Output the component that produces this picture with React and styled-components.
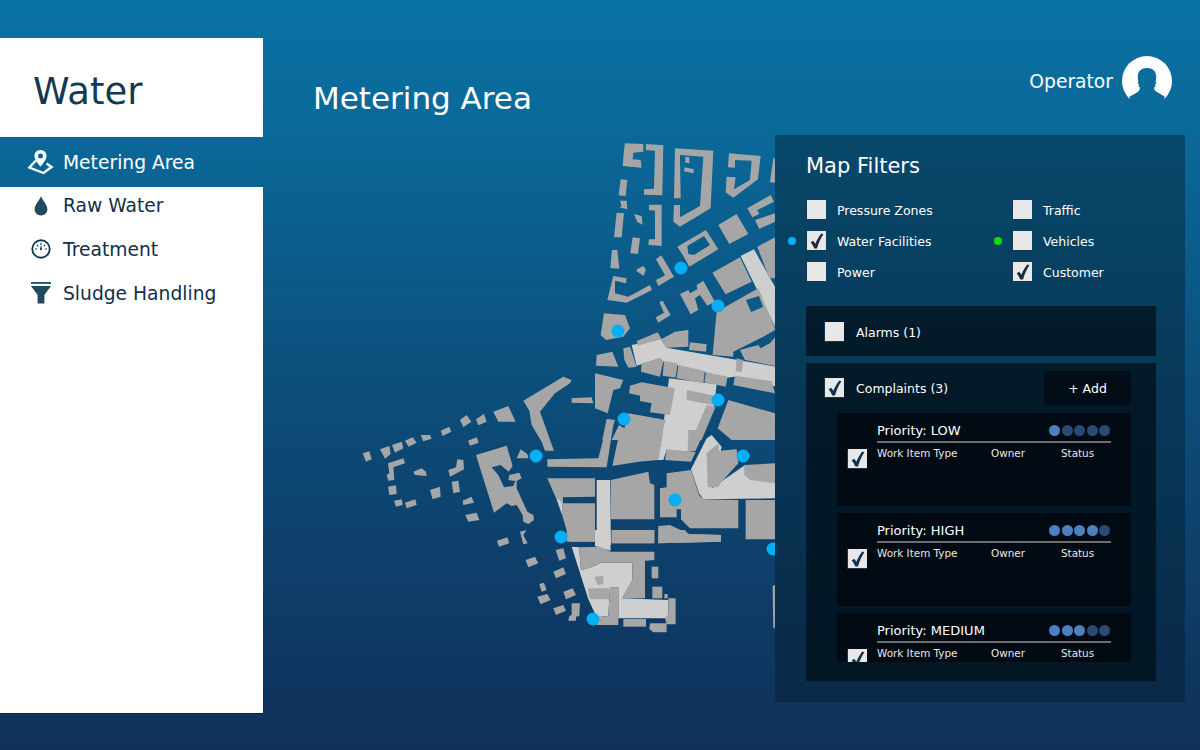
import styled, { createGlobalStyle } from "styled-components";

const GlobalStyle = createGlobalStyle`
  html, body {
    margin: 0;
    padding: 0;
  }
  body {
    font-family: "DejaVu Sans", Verdana, sans-serif;
  }
`;

const Page = styled.div`
  width: 1200px;
  height: 750px;
  display: flex;
  overflow: hidden;
  background: linear-gradient(to bottom, #0a72a4 0%, #0a6797 20%, #0c4f7c 50%, #0f3059 100%);
`;

const Sidebar = styled.aside`
  width: 263px;
  height: 676px;
  margin-top: 38px;
  display: flex;
  flex-direction: column;
  gap: 1px;
  flex-shrink: 0;
`;

const Brand = styled.div`
  height: 92px;
  padding: 7px 0 0 33px;
  display: flex;
  align-items: center;
  background: #fff;
  color: #143a50;
  font-size: 37px;
`;

const ActiveItem = styled.div`
  height: 48px;
  display: flex;
  align-items: center;
  padding-left: 27px;
  gap: 9px;
  color: #fff;
  font-size: 18.7px;
`;

const NavList = styled.nav`
  flex: 1;
  display: flex;
  flex-direction: column;
  gap: 10px;
  padding-top: 1px;
  background: #fff;
  border-bottom: 1px solid #0c2440;
`;

const NavItem = styled.div`
  height: 34px;
  display: flex;
  align-items: center;
  padding-left: 30px;
  gap: 11px;
  color: #12304a;
  font-size: 18.7px;
`;

const IconSlot = styled.span`
  width: 22px;
  display: flex;
  justify-content: center;
`;

const Main = styled.main`
  flex: 1;
  display: flex;
  flex-direction: column;
`;

const TopBar = styled.header`
  height: 135px;
  display: flex;
  justify-content: space-between;
  align-items: flex-start;
  padding: 56px 28px 0 50px;
  box-sizing: border-box;
`;

const Title = styled.h1`
  margin: 22px 0 0;
  font-size: 31px;
  line-height: 40px;
  font-weight: 400;
  color: #fff;
`;

const User = styled.div`
  display: flex;
  align-items: center;
  gap: 9px;
  color: #fff;
  font-size: 18.7px;
`;

const Content = styled.div`
  display: flex;
  padding-left: 97px;
`;

const MapCanvas = styled.svg`
  width: 415px;
  height: 530px;
  flex-shrink: 0;
  display: block;
`;

const Panel = styled.section`
  width: 410px;
  height: 567px;
  box-sizing: border-box;
  padding: 19px 29px 0 31px;
  background: rgba(3, 26, 38, 0.4);
`;

const PanelTitle = styled.h2`
  margin: 0 0 22px;
  font-size: 21px;
  line-height: 24px;
  font-weight: 400;
  color: #fff;
`;

const FilterGrid = styled.div`
  display: grid;
  grid-template-columns: 206px 1fr;
  grid-auto-rows: 31px;
  margin-bottom: 13px;
`;

const Filter = styled.label`
  position: relative;
  display: flex;
  align-items: flex-start;
  gap: 11px;
  color: #fff;
  font-size: 12.5px;
  line-height: 21px;
`;

const LegendDot = styled.span`
  position: absolute;
  left: -18px;
  top: 6px;
  width: 8px;
  height: 8px;
  border-radius: 50%;
  background: ${(p) => p.$color};
`;

const Box = styled.span`
  width: 20px;
  height: 20px;
  flex-shrink: 0;
  display: flex;
  align-items: center;
  justify-content: center;
  box-sizing: border-box;
  background: #e8e8e8;
  border: 1px solid #1c3350;
  border-width: 0 0 1px 1px;
`;

const Section = styled.div`
  background: rgba(2, 14, 22, 0.72);
  margin-bottom: 7px;
  padding: ${(p) => p.$padding};
  height: ${(p) => p.$height}px;
  box-sizing: border-box;
`;

const SectionHead = styled.div`
  display: flex;
  align-items: center;
  gap: 12px;
  color: #fff;
  font-size: 12.5px;
`;

const AddButton = styled.button`
  width: 87px;
  height: 34px;
  margin-left: auto;
  border: 0;
  background: #030d18;
  color: #fff;
  font: 12.5px "DejaVu Sans", Verdana, sans-serif;
`;

const CardList = styled.div`
  margin: 8px 0 0 13px;
  height: 249px;
  overflow: hidden;
  display: flex;
  flex-direction: column;
  gap: 7px;
`;

const Card = styled.article`
  width: 294px;
  height: 93px;
  flex-shrink: 0;
  display: flex;
  gap: 10px;
  padding: 8px 20px 0 10px;
  box-sizing: border-box;
  background: #020b14;
`;

const CardCheck = styled.div`
  margin-top: 28px;
`;

const CardBody = styled.div`
  flex: 1;
`;

const CardTitleRow = styled.div`
  display: flex;
  justify-content: space-between;
  align-items: center;
  height: 18px;
  padding-bottom: 2px;
  border-bottom: 2px solid #6d6f72;
  color: #fff;
  font-size: 13px;
  line-height: 18px;
`;

const CardTitle = styled.span`
  padding-top: 2px;
`;

const Rating = styled.div`
  display: flex;
  gap: 1.5px;
  padding-right: 1px;
`;

const Pip = styled.span`
  width: 11px;
  height: 11px;
  border-radius: 50%;
  background: ${(p) => (p.$on ? "#4b80c1" : "#2a4a74")};
`;

const Columns = styled.div`
  display: grid;
  grid-template-columns: 114px 70px 1fr;
  margin-top: 4px;
  color: #e6e6e6;
  font-size: 10.4px;
  line-height: 13px;
`;

const Check = ({ color = "#1d2a3c" }) => (
  <svg width="18" height="18" viewBox="0 0 18 18">
    <path d="M2.6 10.4 L5.2 8.8 L7.4 11.8 C8.8 8 10.8 4.6 13.2 1.4 L15.4 2.2 C12.6 6.5 10.4 11 9 16.6 L6.4 16.6 C5.4 14 4.2 12.2 2.6 10.4 Z" fill={color} />
  </svg>
);

const PinIcon = () => (
  <svg width="27" height="26" viewBox="0 0 27 26">
    <path fillRule="evenodd" fill="#fff" d="M13.5 1 C9.8 1 7.4 3.8 7.4 6.9 C7.4 10.5 11 14.3 13.5 17.6 C16 14.3 19.6 10.5 19.6 6.9 C19.6 3.8 17.2 1 13.5 1 Z M13.5 4.6 A2.5 2.5 0 1 1 13.5 9.6 A2.5 2.5 0 1 1 13.5 4.6 Z" />
    <path fill="none" stroke="#fff" strokeWidth="2.4" d="M9 11.5 L7.5 13 L2.4 18.5 L16.5 24 L24.6 18 L19.5 14.5" />
  </svg>
);

const DropIcon = () => (
  <svg width="14" height="21" viewBox="0 0 14 21">
    <path fill="#1f4a60" d="M7 1 C8 5 13.4 9.5 13.4 14.2 C13.4 17.8 10.6 20.4 7 20.4 C3.4 20.4 .6 17.8 .6 14.2 C.6 9.5 6 5 7 1 Z" />
  </svg>
);

const GaugeIcon = () => (
  <svg width="20" height="20" viewBox="0 0 22 22">
    <circle cx="11" cy="11" r="9.6" fill="none" stroke="#143a50" strokeWidth="2" />
    <path d="M11 4 V6.5 M4.5 11 H6.8 M15.2 11 H17.5 M6.4 6.4 L8 8 M15.6 6.4 L14 8" stroke="#143a50" strokeWidth="1.2" />
    <path d="M9.8 11.5 L11 6 L12.2 11.5 A1.3 1.3 0 0 1 9.8 11.5 Z" fill="#143a50" />
  </svg>
);

const FunnelIcon = () => (
  <svg width="20" height="22" viewBox="0 0 20 22">
    <rect x="0" y="0" width="20" height="1.8" fill="#1f4a60" />
    <path fill="#1f4a60" d="M0 4 H20 L13.4 13 V21.6 H6.6 V13 Z" />
  </svg>
);

const Avatar = () => (
  <svg width="50" height="50" viewBox="0 0 50 50">
    <mask id="avatar-cut">
      <rect width="50" height="50" fill="#fff" />
      <path fill="#000" d="M25 12 C30.5 12 34 15 34.2 20 C34.3 22 34 24 33.6 25.4 L34.4 27 L33 28.4 L33.6 30 L32 31.4 L32.4 33.4 C33.5 36 38 37 42.5 40.6 L42.5 50 H7.5 L7.5 40.6 C12 37.5 17 36.5 17.6 33.4 L18 31.4 L16.4 30 L17 28.4 L15.6 27 L16.4 25.4 C16 24 15.7 22 15.8 20 C16 15 19.5 12 25 12 Z" />
    </mask>
    <circle cx="25" cy="25" r="25" fill="#fff" mask="url(#avatar-cut)" />
  </svg>
);

// building outlines traced off crops of the map, each crop keeps its own coordinates
const mapCrops = [
  {
    x: 350,
    y: 130,
    light: [
      "1172,378 1212,358 1275,470 1275,590",
    ],
    grey: [
      "825,40 880,42 880,65 850,68 848,88 872,90 875,113 818,108 822,60",
      "888,42 940,46 937,196 882,194 882,178 912,176 915,62 888,60",
      "975,55 1090,62 1082,235 990,290 970,275 972,225 990,225 990,262 1050,228 1060,80 990,75 992,205 972,205",
      "1006,80 1018,82 1018,100 1006,98",
      "1004,112 1032,118 1030,130 1002,124",
      "1137,70 1232,78 1224,148 1150,203 1127,187 1130,140 1157,142 1152,178 1200,150 1205,92 1155,90 1155,113 1134,112",
      "1270,85 1275,85 1275,158 1260,157",
      "812,148 832,150 827,198 806,196",
      "810,212 830,212 832,238 808,232 815,228",
      "800,248 822,250 815,322 792,322",
      "852,252 875,258 878,284 862,276",
      "848,322 870,325 864,372 841,370",
      "897,224 935,224 935,348 895,345 897,328 915,328 915,242 897,240",
      "786,360 802,360 808,416 781,414",
      "790,438 830,445 828,460 795,452 795,490 835,500 900,465 906,480 830,518 772,510",
      "860,418 880,408 888,420 880,438 870,430 860,424",
      "934,376 972,440 925,468 918,450 945,436 918,388",
      "982,350 1068,300 1105,358 1018,410 1000,378 1015,372 1032,375 1080,345 1062,318 1012,348 1015,372 1000,378",
      "1105,285 1160,252 1195,312 1138,342",
      "1192,235 1262,195 1272,215 1222,240 1228,252 1207,262",
      "1215,270 1275,250 1275,275 1228,297",
      "1087,428 1170,382 1205,455 1127,493",
      "1222,350 1275,322 1275,445 1258,445",
      "1100,545 1225,475 1275,595 1275,600 1240,620 1150,665 1150,680 1088,675",
      "990,492 1015,480 1020,490 1042,478 1040,465 1060,452 1095,515 1072,527 1050,495 1035,505 1045,540 1022,553",
      "928,516 938,512 962,555 925,578 917,562 942,548",
      "762,550 825,555 840,595 820,620 768,630 752,615",
      "1170,660 1225,645 1232,655 1260,640 1275,622 1275,708 1185,690",
    ],
  },
  {
    x: 595,
    y: 325,
    light: [
      "110,60 198,42 215,68 545,125 545,185 420,155 395,158 205,110 195,100 125,122",
      "222,160 365,178 358,240 295,345 200,345",
    ],
    grey: [
      "5,90 52,80 70,125 3,122",
      "85,70 105,65 125,125 100,128 88,105",
      "125,48 188,22 200,42 240,20 280,15 280,65 215,68 198,42 128,62",
      "285,52 335,58 333,80 282,75",
      "140,115 195,100 205,108 195,155 138,140",
      "207,108 248,115 242,158 203,152",
      "250,120 330,138 325,175 245,160",
      "333,142 398,155 392,185 328,172",
      "275,195 360,212 355,240 275,225",
      "335,240 362,245 320,345 290,345",
      "420,152 530,168 540,205 415,180",
      "425,100 445,105 440,142 422,138",
      "400,225 540,265 540,345 410,345 368,310",
      "0,145 85,165 75,190 55,195 38,265 0,250",
      "105,182 140,172 240,190 225,270 165,262 170,235 135,228 135,212 102,205",
      "35,282 60,285 40,345 22,345",
      "72,300 88,310 100,265 212,285 195,345 50,345",
    ],
  },
  {
    x: 595,
    y: 430,
    light: [
      "335,25 350,15 380,50 350,175 450,105 540,105 540,205 325,208 312,190 288,118",
      "205,0 300,0 280,65 215,60 205,90 188,90",
      "5,150 45,150 48,345 5,345",
    ],
    grey: [
      "335,70 370,40 372,62 425,58 430,100 380,155 370,172 338,172",
      "448,105 540,100 540,160 465,150 448,135",
      "52,108 75,0 205,0 190,90 130,95",
      "280,0 330,0 302,62 278,65",
      "215,58 302,66 288,95 210,90",
      "47,150 160,125 165,160 178,165 178,268 47,268",
      "50,300 178,300 178,340 50,340",
      "215,130 288,120 312,195 325,208 430,210 430,295 285,295 258,268 258,238 245,238 245,262 195,262 195,175 215,172",
      "190,288 225,285 282,312 378,315 378,335 190,340",
      "452,210 540,210 540,328 452,328",
    ],
  },
  {
    x: 545,
    y: 530,
    light: [
      "150,0 195,0 197,62 150,48",
      "80,50 102,52 108,120 140,112 168,98 262,98 262,150 232,205 370,210 370,265 220,265 220,172 195,172 190,258 155,262 130,208",
    ],
    grey: [
      "65,0 150,0 150,35 65,35",
      "200,0 328,0 328,40 200,40",
      "340,0 420,0 430,12 528,15 528,35 340,40",
      "102,52 165,50 198,65 328,65 328,90 300,92 300,205 232,205 262,150 262,98 168,98 140,112 108,120",
      "148,140 175,138 175,162 158,165",
      "128,175 192,175 192,208 135,208",
      "195,172 220,172 220,285 155,285 155,262 190,258",
      "370,205 392,205 392,283 365,283 360,265 370,250",
      "235,267 303,267 303,290 235,290",
      "315,280 365,280 365,307 325,307 313,297",
      "320,110 340,110 340,145 320,145",
      "322,170 352,170 352,205 322,205",
      "358,192 368,192 368,205 358,205",
    ],
  },
  {
    x: 350,
    y: 380,
    light: ["618,352 638,352 638,410"],
    grey: [
      "640,-10 665,0 660,10 615,40 570,95 612,212 585,212 575,185 545,135 538,92 520,62",
      "665,55 725,52 735,88 730,70 665,68",
      "592,238 745,235 775,118 792,122 770,262 592,260",
      "592,295 735,295 735,350 638,352 638,370 617,352",
      "638,370 735,370 735,485 660,485 638,410",
      "38,220 58,214 65,238 48,245",
      "90,208 118,198 122,222 105,236",
      "126,195 155,185 160,205 135,218",
      "165,182 188,172 200,188 176,200",
      "212,165 240,165 245,176 220,184",
      "272,152 298,140 304,155 278,168",
      "330,120 350,105 364,125 340,142",
      "378,118 402,102 410,125 385,136",
      "430,95 475,78 497,125 445,125",
      "114,250 160,235 165,250 130,262 133,300 115,302 110,285 118,280",
      "190,275 215,265 228,275 230,288 195,285",
      "295,270 318,262 322,238 340,240 342,268 300,290",
      "354,182 380,172 386,188 360,197",
      "114,320 138,316 140,342 118,345",
      "240,330 270,320 272,350 248,358",
      "305,305 325,302 330,335 310,340",
      "132,362 155,358 158,375 138,380",
      "165,368 196,358 200,375 170,385",
      "338,362 365,350 372,368 340,375",
      "346,405 380,398 388,420 355,425",
      "378,225 470,197 488,258 476,275 452,255 425,262 445,285 462,322 490,318 496,303 475,300 478,285 508,278 515,295 500,303 500,325 532,395 550,405 552,420 535,432 520,425 518,405 500,375 485,378 470,370 432,398",
      "500,235 512,208 532,222 535,235",
      "441,482 472,472 478,490 447,500",
      "510,455 530,450 520,465 533,490 520,493",
      "527,540 555,530 565,550 535,562",
      "617,510 640,505 648,535 628,542",
      "610,575 640,562 648,582 618,595",
      "568,612 582,608 590,630 575,635",
      "640,635 668,625 678,645 648,658",
      "562,650 592,642 602,660 572,673",
      "610,685 640,675 648,692 618,705",
      "665,670 690,670 688,708 678,710 678,722 655,722 658,708 665,705",
      "1268,618 1275,615 1275,745 1270,745",
    ],
  },
];

const markers = [
  [681, 268], [718, 306], [618, 331], [624, 419], [718, 400], [536, 456],
  [743, 456], [675, 500], [561, 537], [773, 549], [593, 619],
];

const cropLayer = (kind, fill) =>
  mapCrops.map((crop) => (
    <g key={crop.x + "-" + crop.y + kind} transform={`translate(${crop.x} ${crop.y}) scale(0.3333)`}>
      {crop[kind].map((p) => (
        <polygon key={p} points={p} fill={fill} />
      ))}
    </g>
  ));

const CityMap = () => (
  <MapCanvas viewBox="360 135 415 530">
    {cropLayer("light", "#cfcfcf")}
    {cropLayer("grey", "#a6a6a6")}
    <polygon points="746,300 759,296 763,307 751,312" fill="#0b5a89" />
    {markers.map(([x, y]) => (
      <circle key={x} cx={x} cy={y} r="6.5" fill="#05aef5" />
    ))}
  </MapCanvas>
);

const filters = [
  { label: "Pressure Zones" },
  { label: "Traffic" },
  { label: "Water Facilities", checked: true, dot: "#05aef5" },
  { label: "Vehicles", dot: "#0de00d" },
  { label: "Power" },
  { label: "Customer", checked: true },
];

const complaints = [
  { priority: "LOW", level: 1 },
  { priority: "HIGH", level: 4 },
  { priority: "MEDIUM", level: 3 },
];

export default function App() {
  return (
    <>
      <GlobalStyle />
      <Page>
        <Sidebar>
          <Brand>Water</Brand>
          <ActiveItem>
            <PinIcon />
            Metering Area
          </ActiveItem>
          <NavList>
            <NavItem><IconSlot><DropIcon /></IconSlot>Raw Water</NavItem>
            <NavItem><IconSlot><GaugeIcon /></IconSlot>Treatment</NavItem>
            <NavItem><IconSlot><FunnelIcon /></IconSlot>Sludge Handling</NavItem>
          </NavList>
        </Sidebar>
        <Main>
          <TopBar>
            <Title>Metering Area</Title>
            <User>
              Operator
              <Avatar />
            </User>
          </TopBar>
          <Content>
            <CityMap />
            <Panel>
              <PanelTitle>Map Filters</PanelTitle>
              <FilterGrid>
                {filters.map((f) => (
                  <Filter key={f.label}>
                    {f.dot && <LegendDot $color={f.dot} />}
                    <Box>{f.checked && <Check />}</Box>
                    {f.label}
                  </Filter>
                ))}
              </FilterGrid>
              <Section $height={50} $padding="16px 18px">
                <SectionHead>
                  <Box />
                  Alarms (1)
                </SectionHead>
              </Section>
              <Section $height={318} $padding="8px 25px 0 18px">
                <SectionHead>
                  <Box><Check color="#12304f" /></Box>
                  Complaints (3)
                  <AddButton>+ Add</AddButton>
                </SectionHead>
                <CardList>
                  {complaints.map((c) => (
                    <Card key={c.priority}>
                      <CardCheck>
                        <Box><Check color="#12304f" /></Box>
                      </CardCheck>
                      <CardBody>
                        <CardTitleRow>
                          <CardTitle>Priority: {c.priority}</CardTitle>
                          <Rating>
                            {[1, 2, 3, 4, 5].map((n) => (
                              <Pip key={n} $on={n <= c.level} />
                            ))}
                          </Rating>
                        </CardTitleRow>
                        <Columns>
                          <span>Work Item Type</span>
                          <span>Owner</span>
                          <span>Status</span>
                        </Columns>
                      </CardBody>
                    </Card>
                  ))}
                </CardList>
              </Section>
            </Panel>
          </Content>
        </Main>
      </Page>
    </>
  );
}
